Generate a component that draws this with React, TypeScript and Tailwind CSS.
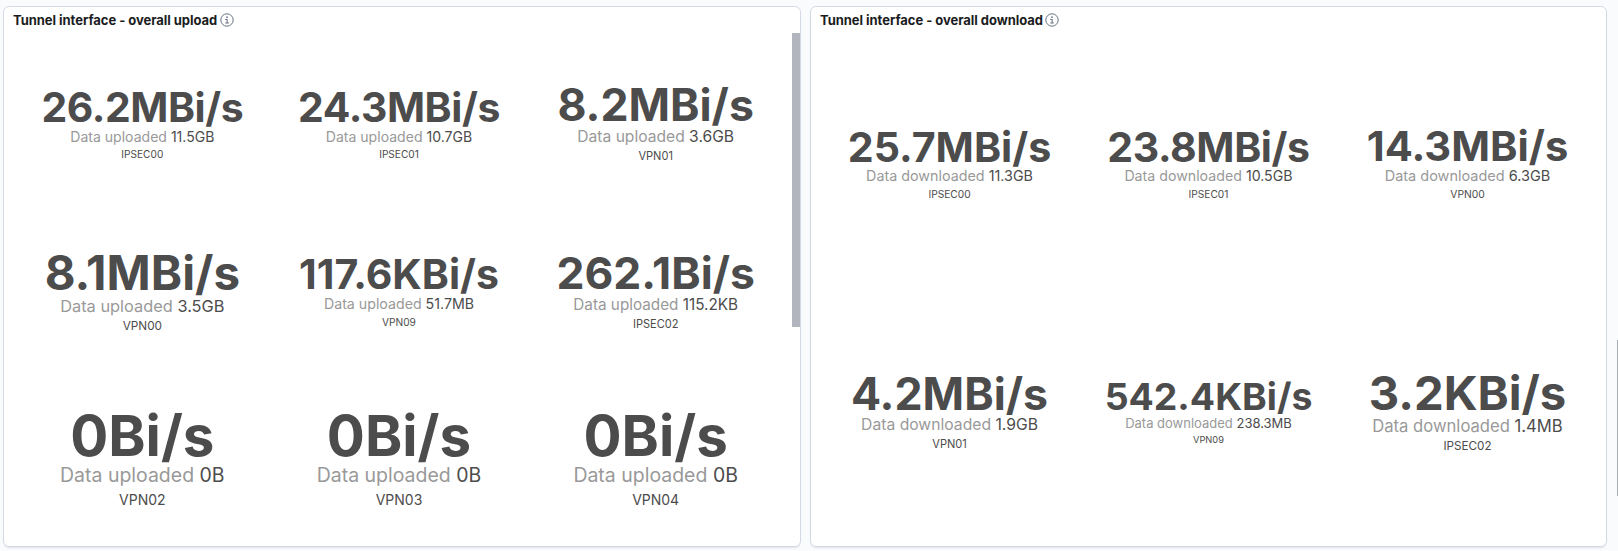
type Metric = { rate: string; total: string; name: string; size: number; sub: number; tight?: boolean; lift?: number };

const uploads: Metric[] = [
  { rate: "26.2MBi/s", total: "11.5GB", name: "IPSEC00", size: 40.9, sub: 14.05, tight: true },
  { rate: "24.3MBi/s", total: "10.7GB", name: "IPSEC01", size: 40.9, sub: 14.07, tight: true },
  { rate: "8.2MBi/s", total: "3.6GB", name: "VPN01", size: 44.58, sub: 15.61, lift: 2 },
  { rate: "8.1MBi/s", total: "3.5GB", name: "VPN00", size: 47.44, sub: 16.38 },
  { rate: "117.6KBi/s", total: "51.7MB", name: "VPN09", size: 41.02, sub: 14.2 },
  { rate: "262.1Bi/s", total: "115.2KB", name: "IPSEC02", size: 44.47, sub: 15.28 },
  { rate: "0Bi/s", total: "0B", name: "VPN02", size: 56.46, sub: 19.48 },
  { rate: "0Bi/s", total: "0B", name: "VPN03", size: 56.46, sub: 19.48 },
  { rate: "0Bi/s", total: "0B", name: "VPN04", size: 56.46, sub: 19.48 },
];

const downloads: Metric[] = [
  { rate: "25.7MBi/s", total: "11.3GB", name: "IPSEC00", size: 41.14, sub: 14.32 },
  { rate: "23.8MBi/s", total: "10.5GB", name: "IPSEC01", size: 41, sub: 14.19, tight: true },
  { rate: "14.3MBi/s", total: "6.3GB", name: "VPN00", size: 41.61, sub: 14.49 },
  { rate: "4.2MBi/s", total: "1.9GB", name: "VPN01", size: 44.61, sub: 15.69 },
  { rate: "542.4KBi/s", total: "238.3MB", name: "VPN09", size: 37.4, sub: 13 },
  { rate: "3.2KBi/s", total: "1.4MB", name: "IPSEC02", size: 47.18, sub: 16.62 },
];

function InfoIcon() {
  return (
    <svg viewBox="0 0 16 16" className="ml-[1.5px] size-4 shrink-0 text-[#69707d]" fill="currentColor">
      <circle cx="8" cy="8" r="6.2" fill="none" stroke="currentColor" />
      <circle cx="8" cy="5.2" r="0.85" />
      <path d="M6.25 7h2.4v3.5H9.8v1H6.25v-1H7.6V8H6.25z" />
    </svg>
  );
}

function MetricCell({ metric, label }: { metric: Metric; label: string }) {
  return (
    <div
      className="flex flex-col items-center justify-center whitespace-nowrap text-[#4c4c4c]"
      style={{ fontSize: metric.size, paddingBottom: metric.lift }}
    >
      <div className={"leading-none font-bold " + (metric.tight ? "tracking-[-0.01em]" : "tracking-normal")}>
        {metric.rate}
      </div>
      <div className="mt-[0.03em]">
        <div className="leading-none" style={{ fontSize: metric.sub }}>
          <span className="text-[#999999]">{label}</span> <span>{metric.total}</span>
        </div>
      </div>
      <div className="mt-[0.14em]">
        <div className="text-[0.248em] leading-none">{metric.name}</div>
      </div>
    </div>
  );
}

function Panel({ title, label, metrics, scroll }: { title: string; label: string; metrics: Metric[]; scroll?: boolean }) {
  return (
    <section
      className={
        "flex h-[541px] flex-col overflow-hidden rounded-[6px] border border-[#d3dae6] bg-white shadow-[0_2px_2px_-1px_rgba(152,162,179,0.3)] " +
        (scroll ? "w-[798px]" : "w-[797px]")
      }
    >
      <header className="flex h-[26px] shrink-0 items-center pl-[9px]">
        <h2 className="text-[13px] leading-5 font-bold tracking-[-0.04px] text-[#1a1c21]">{title}</h2>
        <InfoIcon />
      </header>
      <div className="flex min-h-0 flex-1">
        <div
          className={
            "grid flex-1 grid-cols-3 content-start " +
            (scroll ? "auto-rows-[167px] pt-[7px] pr-2 pl-[10px]" : "auto-rows-[248px] px-[9px] pt-[6px]")
          }
        >
          {metrics.map((m) => (
            <MetricCell key={m.name} metric={m} label={label} />
          ))}
        </div>
        {scroll && <div className="h-[294px] w-2 bg-[#b3b5be]" />}
      </div>
    </section>
  );
}

export default function App() {
  return (
    <main className="flex h-[551px] w-[1618px] gap-[9px] overflow-hidden bg-[#fafbfd] pt-[6px] pl-[3px] font-['Inter',sans-serif]">
      <Panel title="Tunnel interface - overall upload" label="Data uploaded" metrics={uploads} scroll />
      <Panel title="Tunnel interface - overall download" label="Data downloaded" metrics={downloads} />
      <div className="mt-[334px] ml-auto h-[156px] w-px bg-[#a9abb3]" />
    </main>
  );
}
